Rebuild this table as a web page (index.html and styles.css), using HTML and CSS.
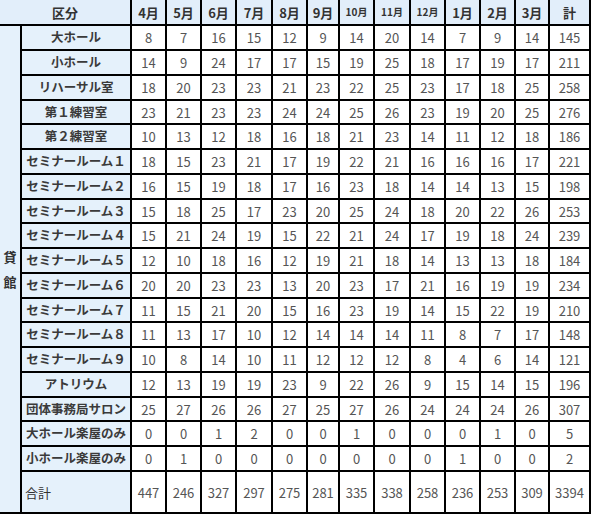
FILE: index.html
```html
<!DOCTYPE html>
<html lang="ja">
<head>
<meta charset="utf-8">
<title>利用件数</title>
<link rel="stylesheet" href="styles.css">
</head>
<body>
<table class="usage">
<colgroup>
<col class="c-group"><col class="c-name">
<col class="c-m"><col class="c-m"><col class="c-m"><col class="c-m36"><col class="c-m"><col class="c-m32"><col class="c-m"><col class="c-m36"><col class="c-m"><col class="c-m"><col class="c-m"><col class="c-m34"><col class="c-total">
</colgroup>
<thead>
<tr>
<th colspan="2">区分</th>
<th>4月</th><th>5月</th><th>6月</th><th>7月</th><th>8月</th><th>9月</th>
<th class="small">10月</th><th class="small">11月</th><th class="small">12月</th>
<th>1月</th><th>2月</th><th>3月</th><th>計</th>
</tr>
</thead>
<tbody>
<tr><th class="group" rowspan="19"><span>貸</span><span>館</span></th><th class="name">大ホール</th><td>8</td><td>7</td><td>16</td><td>15</td><td>12</td><td>9</td><td>14</td><td>20</td><td>14</td><td>7</td><td>9</td><td>14</td><td>145</td></tr>
<tr><th class="name">小ホール</th><td>14</td><td>9</td><td>24</td><td>17</td><td>17</td><td>15</td><td>19</td><td>25</td><td>18</td><td>17</td><td>19</td><td>17</td><td>211</td></tr>
<tr><th class="name">リハーサル室</th><td>18</td><td>20</td><td>23</td><td>23</td><td>21</td><td>23</td><td>22</td><td>25</td><td>23</td><td>17</td><td>18</td><td>25</td><td>258</td></tr>
<tr><th class="name">第１練習室</th><td>23</td><td>21</td><td>23</td><td>23</td><td>24</td><td>24</td><td>25</td><td>26</td><td>23</td><td>19</td><td>20</td><td>25</td><td>276</td></tr>
<tr><th class="name">第２練習室</th><td>10</td><td>13</td><td>12</td><td>18</td><td>16</td><td>18</td><td>21</td><td>23</td><td>14</td><td>11</td><td>12</td><td>18</td><td>186</td></tr>
<tr><th class="name">セミナールーム１</th><td>18</td><td>15</td><td>23</td><td>21</td><td>17</td><td>19</td><td>22</td><td>21</td><td>16</td><td>16</td><td>16</td><td>17</td><td>221</td></tr>
<tr><th class="name">セミナールーム２</th><td>16</td><td>15</td><td>19</td><td>18</td><td>17</td><td>16</td><td>23</td><td>18</td><td>14</td><td>14</td><td>13</td><td>15</td><td>198</td></tr>
<tr><th class="name">セミナールーム３</th><td>15</td><td>18</td><td>25</td><td>17</td><td>23</td><td>20</td><td>25</td><td>24</td><td>18</td><td>20</td><td>22</td><td>26</td><td>253</td></tr>
<tr><th class="name">セミナールーム４</th><td>15</td><td>21</td><td>24</td><td>19</td><td>15</td><td>22</td><td>21</td><td>24</td><td>17</td><td>19</td><td>18</td><td>24</td><td>239</td></tr>
<tr><th class="name">セミナールーム５</th><td>12</td><td>10</td><td>18</td><td>16</td><td>12</td><td>19</td><td>21</td><td>18</td><td>14</td><td>13</td><td>13</td><td>18</td><td>184</td></tr>
<tr><th class="name">セミナールーム６</th><td>20</td><td>20</td><td>23</td><td>23</td><td>13</td><td>20</td><td>23</td><td>17</td><td>21</td><td>16</td><td>19</td><td>19</td><td>234</td></tr>
<tr><th class="name">セミナールーム７</th><td>11</td><td>15</td><td>21</td><td>20</td><td>15</td><td>16</td><td>23</td><td>19</td><td>14</td><td>15</td><td>22</td><td>19</td><td>210</td></tr>
<tr><th class="name">セミナールーム８</th><td>11</td><td>13</td><td>17</td><td>10</td><td>12</td><td>14</td><td>14</td><td>14</td><td>11</td><td>8</td><td>7</td><td>17</td><td>148</td></tr>
<tr><th class="name">セミナールーム９</th><td>10</td><td>8</td><td>14</td><td>10</td><td>11</td><td>12</td><td>12</td><td>12</td><td>8</td><td>4</td><td>6</td><td>14</td><td>121</td></tr>
<tr><th class="name">アトリウム</th><td>12</td><td>13</td><td>19</td><td>19</td><td>23</td><td>9</td><td>22</td><td>26</td><td>9</td><td>15</td><td>14</td><td>15</td><td>196</td></tr>
<tr><th class="name">団体事務局サロン</th><td>25</td><td>27</td><td>26</td><td>26</td><td>27</td><td>25</td><td>27</td><td>26</td><td>24</td><td>24</td><td>24</td><td>26</td><td>307</td></tr>
<tr><th class="name">大ホール楽屋のみ</th><td>0</td><td>0</td><td>1</td><td>2</td><td>0</td><td>0</td><td>1</td><td>0</td><td>0</td><td>0</td><td>1</td><td>0</td><td>5</td></tr>
<tr><th class="name">小ホール楽屋のみ</th><td>0</td><td>1</td><td>0</td><td>0</td><td>0</td><td>0</td><td>0</td><td>0</td><td>0</td><td>1</td><td>0</td><td>0</td><td>2</td></tr>
<tr class="sum"><th class="sum-label">合計</th><td>447</td><td>246</td><td>327</td><td>297</td><td>275</td><td>281</td><td>335</td><td>338</td><td>258</td><td>236</td><td>253</td><td>309</td><td>3394</td></tr>
</tbody>
</table>
</body>
</html>
```

FILE: styles.css
```css
html, body {
  margin: 0;
  padding: 0;
  background: #ffffff;
}

.usage {
  border-collapse: collapse;
  table-layout: fixed;
  width: 591px;
  font-family: "Noto Sans CJK JP", "DejaVu Sans", sans-serif;
  font-size: 13px;
  color: #555555;
}

.c-group { width: 21px; }
.c-name { width: 110px; }
.c-m { width: 35px; }
.c-m36 { width: 36px; }
.c-m32 { width: 32px; }
.c-m34 { width: 34px; }
.c-total { width: 41px; }

.usage th,
.usage td {
  border: 2px solid #000000;
  padding: 0;
  text-align: center;
  vertical-align: middle;
  line-height: 1;
  white-space: nowrap;
}

.usage thead th {
  border-top: none;
  height: 24px;
  background: #e2eefa;
  color: #333333;
  font-weight: bold;
  font-size: 13px;
}

.usage thead th:first-child { border-left: none; }

.usage thead th.small { font-size: 10px; }

.usage tbody tr { height: 25px; }
.usage tbody tr:nth-child(4n) { height: 24px; }
.usage tbody tr.sum { height: 42px; }

.usage th.group {
  border-left: none;
  background: #e5f1fb;
  color: #333333;
  font-weight: bold;
  font-size: 13px;
}

.group span { display: block; line-height: 25px; }

.usage th.name {
  background: #e5f1fb;
  color: #3a3a3a;
  font-weight: bold;
  font-size: 12.5px;
}

.usage th.sum-label {
  background: #e5f1fb;
  color: #333333;
  font-weight: normal;
  text-align: left;
  padding-left: 3px;
}
```
